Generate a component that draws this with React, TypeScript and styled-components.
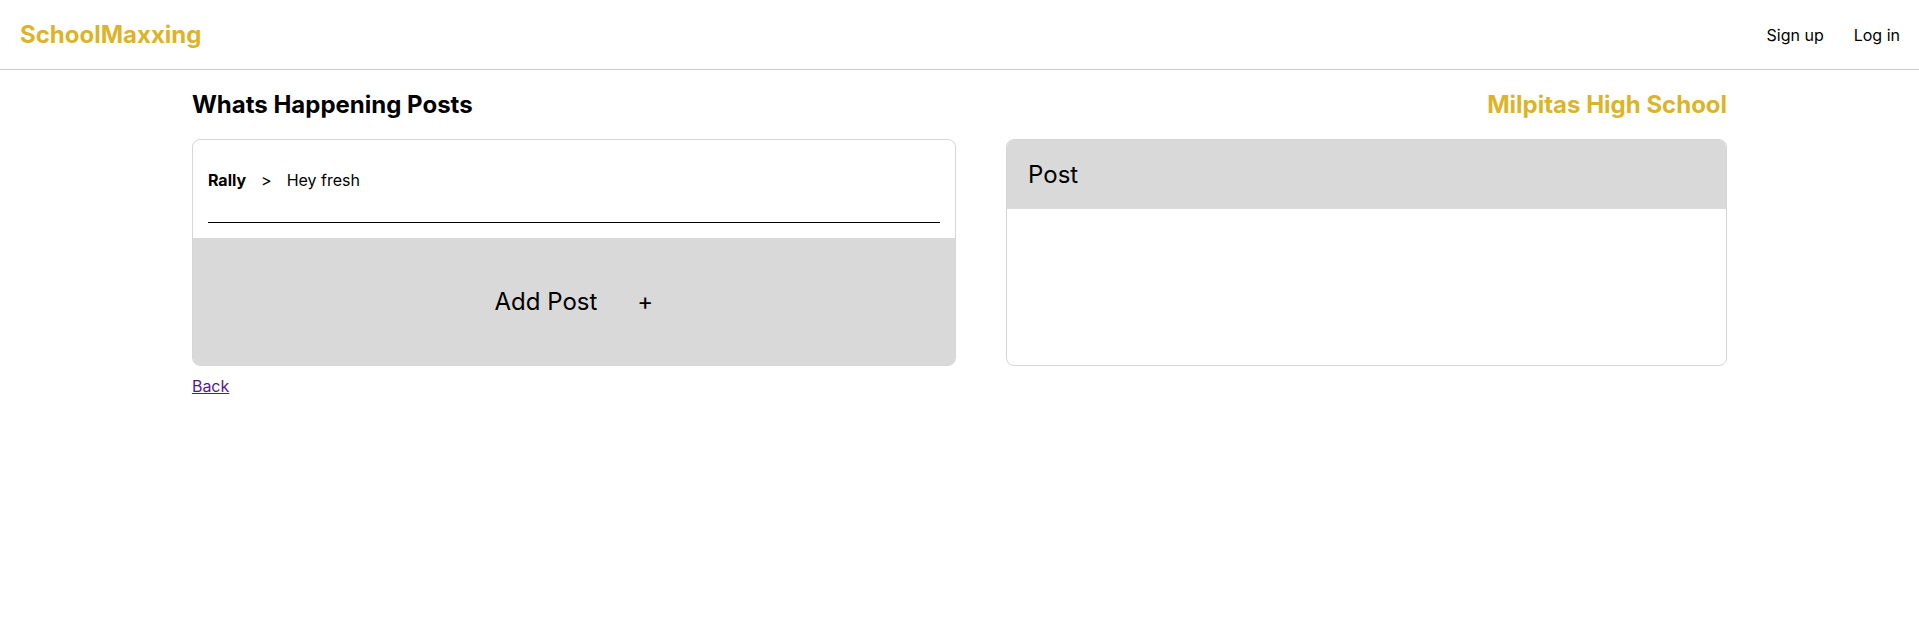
import { FC } from 'react';
import styled, { createGlobalStyle } from 'styled-components';

const GlobalStyle = createGlobalStyle`
    body {
        margin: 0;
        font-family: Inter, "Noto Sans", sans-serif;
        color: #000;
        background: #fff;
    }
`;

const gold = '#DBB42C';

const NavBar = styled.header`
    height: 69px;
    border-bottom: 1px solid #cccccc;
    display: flex;
    align-items: center;
    justify-content: space-between;
    padding: 0 19px 0 20px;
`;

const Logo = styled.div`
    color: ${gold};
    font-size: 24px;
    font-weight: 700;
`;

const NavLinks = styled.nav`
    display: flex;
    gap: 30px;
    font-size: 16px;
    span {
        cursor: pointer;
    }
`;

const Page = styled.main`
    width: 80%;
    margin: 0 auto;
`;

const TitleRow = styled.div`
    display: flex;
    justify-content: space-between;
    align-items: center;
    margin-top: 20px;
    margin-bottom: 20px;
    h2 {
        margin: 0;
        font-size: 24px;
        font-weight: 700;
        line-height: 29px;
    }
    #school {
        color: ${gold};
    }
`;

const Columns = styled.div`
    display: grid;
    grid-template-columns: 764px 721px;
    justify-content: space-between;
    align-items: stretch;
`;

const Card = styled.div`
    border: 1px solid #d6d6d6;
    border-radius: 8px;
    overflow: hidden;
    display: flex;
    flex-direction: column;
    box-sizing: border-box;
`;

const PostList = styled.div`
    padding: 15px;
`;

const PostItem = styled.div`
    display: flex;
    align-items: center;
    font-size: 16px;
    line-height: 19px;
    padding: 16px 0 32px;
    border-bottom: 1px solid #000;
    b {
        font-weight: 700;
    }
    .arrow {
        margin: 0 15px;
    }
`;

const AddPostButton = styled.button`
    flex: 1;
    border: none;
    background: #d9d9d9;
    font-family: inherit;
    font-size: 24px;
    color: #000;
    display: flex;
    align-items: center;
    justify-content: center;
    gap: 40px;
    cursor: pointer;
    min-height: 127px;
`;

const PostHeader = styled.div`
    background: #d9d9d9;
    height: 69px;
    display: flex;
    align-items: center;
    padding: 0 21px;
    font-size: 24px;
`;

const PostBody = styled.div`
    flex: 1;
`;

const BackLink = styled.a`
    display: inline-block;
    margin-top: 10px;
    font-size: 16px;
    color: #551a8b;
    text-decoration: underline;
`;

export const App: FC = () => {
    return (
        <>
            <GlobalStyle />
            <NavBar>
                <Logo>SchoolMaxxing</Logo>
                <NavLinks>
                    <span>Sign up</span>
                    <span>Log in</span>
                </NavLinks>
            </NavBar>
            <Page>
                <TitleRow>
                    <h2>Whats Happening Posts</h2>
                    <h2 id="school">Milpitas High School</h2>
                </TitleRow>
                <Columns>
                    <Card>
                        <PostList>
                            <PostItem>
                                <b>Rally</b>
                                <span className="arrow">&gt;</span>
                                <span>Hey fresh</span>
                            </PostItem>
                        </PostList>
                        <AddPostButton>
                            <span>Add Post</span>
                            <span>+</span>
                        </AddPostButton>
                    </Card>
                    <Card>
                        <PostHeader>Post</PostHeader>
                        <PostBody />
                    </Card>
                </Columns>
                <BackLink href="#">Back</BackLink>
            </Page>
        </>
    );
};

export default App;
